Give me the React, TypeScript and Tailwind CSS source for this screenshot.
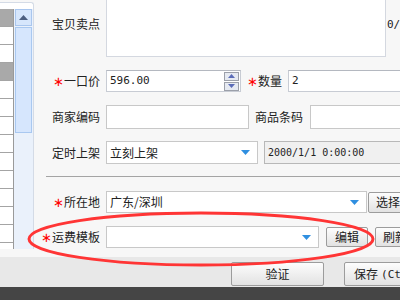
import React from 'react';

const font = { fontFamily: '"Noto Sans CJK SC", "Noto Sans", sans-serif' };
const mono = { fontFamily: '"DejaVu Sans Mono", "Liberation Mono", monospace' };

function Star() {
  return <span className="text-[#ff0000] text-[13px]" style={{ fontFamily: '"DejaVu Sans", sans-serif' }}>∗</span>;
}

function Arrow() {
  return (
    <svg width="9" height="5" viewBox="0 0 9 5" className="shrink-0">
      <path d="M0 0 H9 L4.5 5 Z" fill="#2f8fe0" />
    </svg>
  );
}

function Label({ children }: { children: React.ReactNode }) {
  return <div className="w-[66px] shrink-0 text-right leading-none whitespace-nowrap">{children}</div>;
}

function Btn({ children, className = '' }: { children: React.ReactNode; className?: string }) {
  return (
    <div
      className={`shrink-0 flex items-center justify-center rounded-[2px] border border-[#9c9c9c] bg-gradient-to-b from-[#fdfdfd] to-[#e2e2e2] leading-none whitespace-nowrap ${className}`}
    >
      {children}
    </div>
  );
}

function LeftPanel() {
  const rows = Array.from({ length: 14 });
  return (
    <div className="w-[34px] h-[247px] mt-[2px] shrink-0 flex flex-col bg-white border-t border-r border-[#d4dbe6] rounded-tr-[3px] overflow-hidden">
      <div className="h-[6px] shrink-0" />
      <div className="flex flex-1 min-h-0">
        <div className="w-[14px] shrink-0 flex flex-col border-r border-[#9a9a9a]">
          {rows.map((_, i) => (
            <div
              key={i}
              className={`h-[18px] shrink-0 border-b border-[#a4a4a4] ${i === 0 || i === 3 ? 'bg-[#a9a9a9]' : 'bg-white'}`}
            />
          ))}
        </div>
        <div className="flex-1 flex flex-col bg-[#eaf1fb] px-px">
          <div className="h-[17px] shrink-0 flex items-center justify-center bg-[#d6e6fc] border border-[#a9c6ee]">
            <svg width="9" height="5" viewBox="0 0 9 5">
              <path d="M0 5 H9 L4.5 0 Z" fill="#4d5f80" />
            </svg>
          </div>
          <div className="h-[106px] mt-[1px] shrink-0 bg-[#d6e6fd] border border-[#a9c8f0]" />
        </div>
      </div>
    </div>
  );
}

export default function App() {
  return (
    <div className="relative w-[400px] h-[300px] overflow-hidden bg-[#f7f7f7] text-[12px] text-[#222]" style={font}>
      <div className="flex h-[257px]">
        <LeftPanel />
        <div className="flex-1 flex flex-col">
          {/* 宝贝卖点 */}
          <div className="flex items-start">
            <Label>
              <div className="pt-[18px]">宝贝卖点</div>
            </Label>
            <div className="ml-[6px] w-[280px] h-[57px] shrink-0 bg-white border border-t-0 border-[#d4d8e0]" />
            <div className="ml-px pt-[19px] leading-none whitespace-nowrap text-[11px]" style={mono}>0/150</div>
          </div>

          {/* 一口价 / 数量 */}
          <div className="flex items-center mt-[13px] h-[22px]">
            <Label>
              <Star />一口价
            </Label>
            <div className="ml-[6px] w-[135px] h-full shrink-0 flex items-center bg-white border border-[#c8ccd4] border-t-[#b4b8c0] pl-[3px] pr-px">
              <span className="flex-1 text-[11px]" style={mono}>596.00</span>
              <div className="flex flex-col gap-px">
                <div className="w-[15px] h-[9px] flex items-center justify-center bg-[#e6eaf2] border border-[#9ca0aa]">
                  <svg width="7" height="4" viewBox="0 0 7 4">
                    <path d="M0 4 H7 L3.5 0 Z" fill="#5b6cb8" />
                  </svg>
                </div>
                <div className="w-[15px] h-[9px] flex items-center justify-center bg-[#e6eaf2] border border-[#9ca0aa]">
                  <svg width="7" height="4" viewBox="0 0 7 4">
                    <path d="M0 0 H7 L3.5 4 Z" fill="#5b6cb8" />
                  </svg>
                </div>
              </div>
            </div>
            <div className="ml-[6px] leading-none whitespace-nowrap">
              <Star />数量
            </div>
            <div className="ml-[6px] w-[150px] h-full shrink-0 flex items-center bg-white border border-[#c8ccd4] border-t-[#b4b8c0] pl-[3px] text-[11px]" style={mono}>
              2
            </div>
          </div>

          {/* 商家编码 / 商品条码 */}
          <div className="flex items-center mt-[13px] h-[24px]">
            <Label>商家编码</Label>
            <div className="ml-[6px] w-[143px] h-full shrink-0 bg-white border border-[#c8c8c8]" />
            <div className="ml-[6px] leading-none whitespace-nowrap">商品条码</div>
            <div className="ml-[7px] w-[150px] h-full shrink-0 bg-white border border-[#c8c8c8]" />
          </div>

          {/* 定时上架 */}
          <div className="flex items-center mt-[12px] h-[23px]">
            <Label>定时上架</Label>
            <div className="ml-[6px] w-[152px] h-full shrink-0 flex items-center bg-white border border-[#c8c8c8] pl-[3px] pr-[7px]">
              <span className="flex-1">立刻上架</span>
              <Arrow />
            </div>
            <div
              className="ml-[6px] w-[150px] h-full shrink-0 flex items-center bg-[#f0f0f0] border border-[#b8b8b8] pl-[3px] whitespace-nowrap text-[10px]"
              style={mono}
            >
              2000/1/1 0:00:00
            </div>
          </div>

          <div className="mt-[12px] ml-[12px] h-px bg-[#a4a4a4]" />

          {/* 所在地 */}
          <div className="flex items-center mt-[14px] h-[22px]">
            <Label>
              <Star />所在地
            </Label>
            <div className="ml-[6px] w-[261px] h-full shrink-0 flex items-center bg-white border border-[#c8c8c8] pl-[3px] pr-[7px]">
              <span className="flex-1">广东/深圳</span>
              <Arrow />
            </div>
            <Btn className="ml-px w-[40px] h-[21px]">选择</Btn>
          </div>

          {/* 运费模板 */}
          <div className="flex items-center mt-[13px] h-[22px]">
            <Label>
              <Star />运费模板
            </Label>
            <div className="ml-[6px] w-[213px] h-full shrink-0 flex items-center bg-white border border-[#c8c8c8] pl-[3px] pr-[7px]">
              <span className="flex-1" />
              <Arrow />
            </div>
            <Btn className="ml-[7px] w-[42px] h-[20px]">编辑</Btn>
            <Btn className="ml-[7px] w-[40px] h-[20px]">刷新</Btn>
          </div>
        </div>
      </div>

      {/* bottom buttons */}
      <div className="h-[30px] bg-[#e8e8e8] flex items-start pt-[5px] pl-[231px]">
        <Btn className="w-[93px] h-[24px]">验证</Btn>
        <Btn className="ml-[20px] w-[90px] h-[24px] justify-start pl-[9px]">
          保存 <span className="ml-[3px] text-[11px]" style={mono}>(Ctrl+S)</span>
        </Btn>
      </div>
      <div className="h-[13px] bg-[#454545]" />

      {/* red annotation */}
      <svg className="absolute inset-0 pointer-events-none" width="400" height="300" viewBox="0 0 400 300">
        <ellipse cx="201" cy="239" rx="172" ry="26" fill="none" stroke="#ff3535" strokeWidth="3" />
      </svg>
    </div>
  );
}
